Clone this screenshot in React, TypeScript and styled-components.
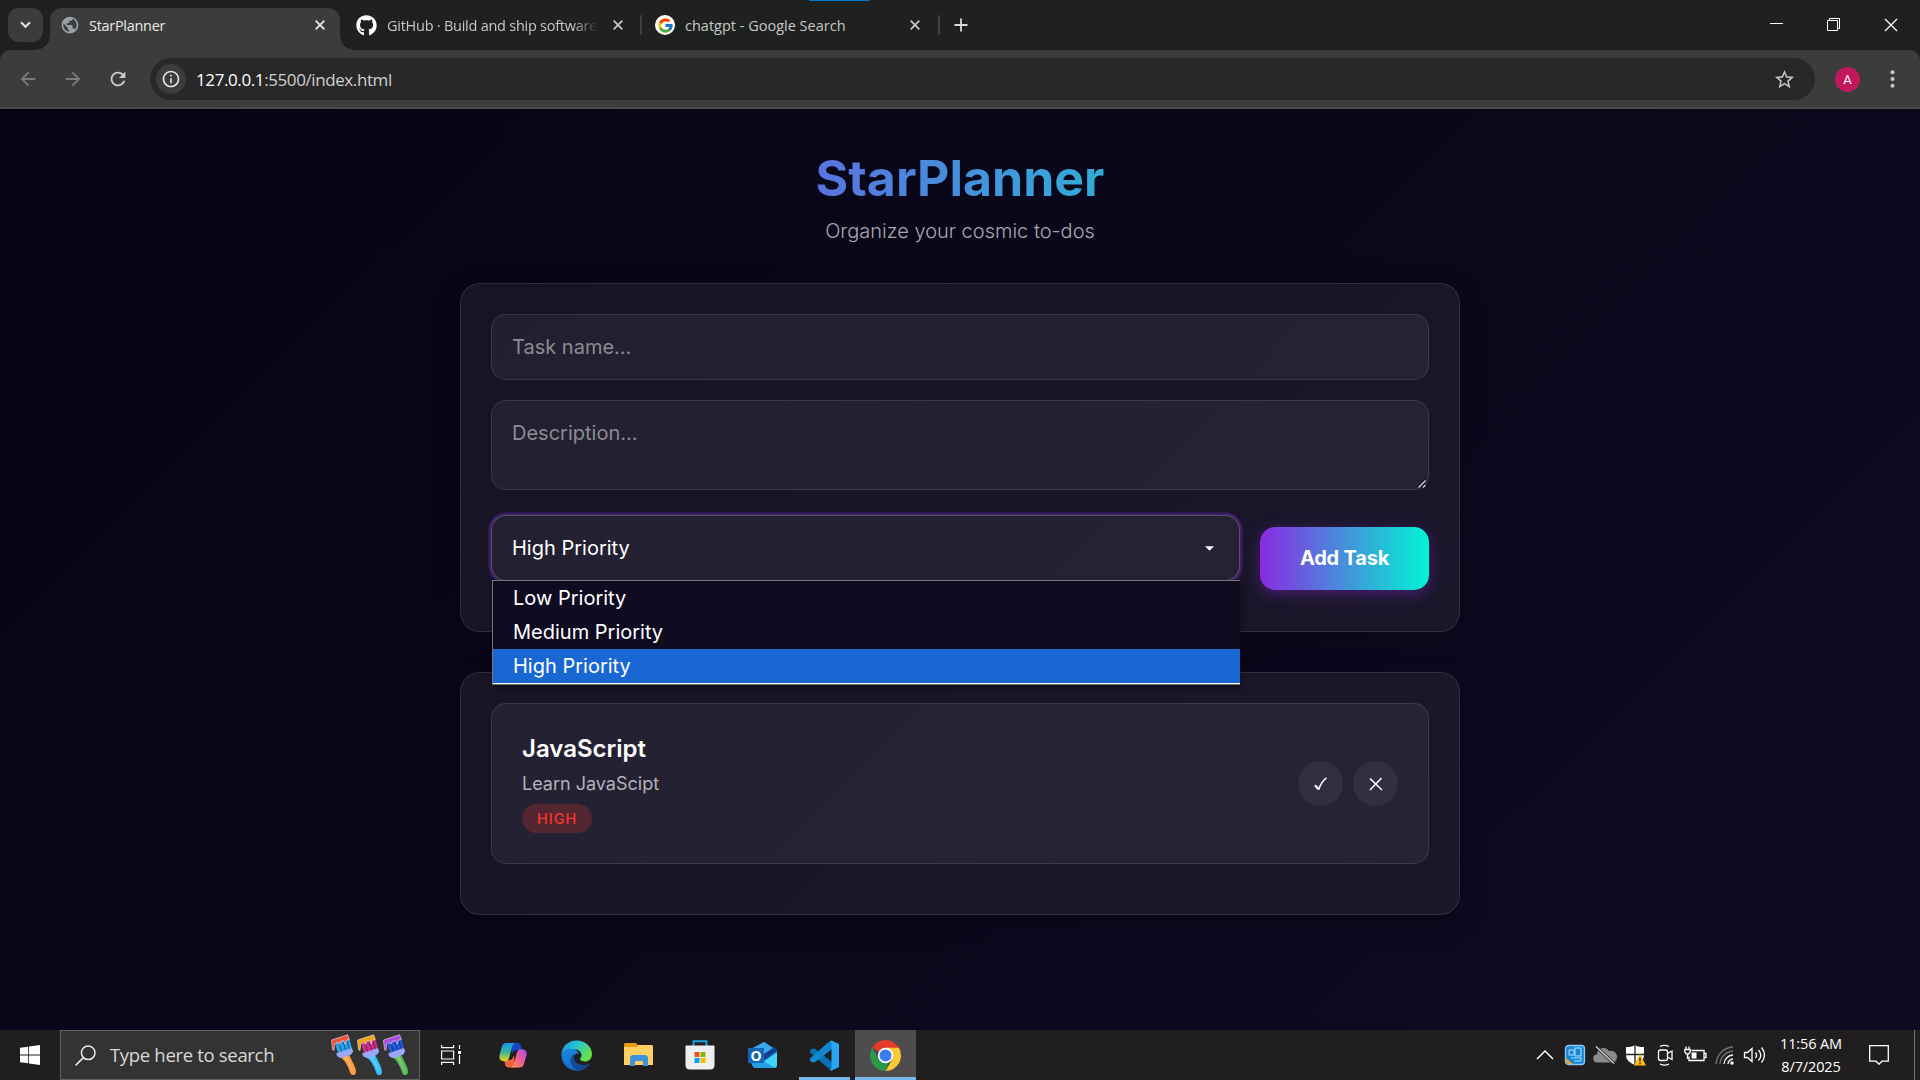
import React from "react";
import styled, { createGlobalStyle, css } from "styled-components";
import { MdArrowBack, MdArrowForward, MdInfoOutline, MdPublic, MdRefresh, MdStarBorder } from "react-icons/md";
import { FaGithub } from "react-icons/fa";
import { FcGoogle } from "react-icons/fc";

const systemFont = `"Segoe UI", "Open Sans", "Noto Sans", sans-serif`;
const pageFont = `Inter, "Liberation Sans", sans-serif`;

const GlobalStyle = createGlobalStyle`
  * { box-sizing: border-box; }
  body { margin: 0; background: #09061a; overflow: hidden; }
  svg { display: block; flex: none; }
`;

const Screen = styled.div`
  width: 1920px;
  height: 1080px;
  display: flex;
  flex-direction: column;
  overflow: hidden;
  font-family: ${systemFont};
`;

/* ---------- Browser chrome ---------- */

const TabStrip = styled.div`
  position: relative;
  height: 50px;
  flex: none;
  display: flex;
  align-items: stretch;
  padding: 8px 0 0 8px;
  background: #1f2120;
`;

const LoadingMark = styled.div`
  position: absolute;
  top: 0;
  left: 809px;
  width: 60px;
  height: 1px;
  background: #0078d7;
`;

const TabSearch = styled.div`
  width: 35px;
  height: 34px;
  margin-right: 7px;
  border-radius: 11px;
  background: #3c3c3c;
  display: flex;
  align-items: center;
  justify-content: center;
`;

const Tab = styled.div<{ $active?: boolean; $width: number; $start: number; $end: number }>`
  position: relative;
  width: ${(p) => p.$width}px;
  display: flex;
  align-items: center;
  padding: 0 ${(p) => p.$end}px 8px ${(p) => p.$start}px;
  color: ${(p) => (p.$active ? "#e8e8e8" : "#c7c7c7")};
  ${(p) =>
    p.$active &&
    css`
      background: #3c3c3c;
      border-radius: 12px 12px 0 0;
      &::before,
      &::after {
        content: "";
        position: absolute;
        bottom: 0;
        width: 14px;
        height: 14px;
      }
      &::before {
        left: -14px;
        background: radial-gradient(circle at 0 0, transparent 13.5px, #3c3c3c 14px);
      }
      &::after {
        right: -14px;
        background: radial-gradient(circle at 100% 0, transparent 13.5px, #3c3c3c 14px);
      }
    `}
`;

const TabTitle = styled.span<{ $spacing: number; $start: number; $end?: number; $fade?: boolean }>`
  flex: 1;
  min-width: 0;
  margin: 0 ${(p) => p.$end ?? 9}px 0 ${(p) => p.$start}px;
  padding-top: 2px;
  overflow: hidden;
  white-space: nowrap;
  font-size: 14.5px;
  line-height: 22px;
  letter-spacing: ${(p) => p.$spacing}px;
  ${(p) => p.$fade && css`
    mask-image: linear-gradient(90deg, #000 88%, transparent 100%);
  `}
`;

const TabDivider = styled.div`
  width: 2px;
  height: 20px;
  margin-top: 7px;
  border-radius: 1px;
  background: #3f4140;
`;

const GoogleBadge = styled.span`
  width: 20px;
  height: 20px;
  border-radius: 50%;
  background: #fff;
  display: flex;
  align-items: center;
  justify-content: center;
`;

const NewTab = styled.div`
  width: 42px;
  height: 34px;
  display: flex;
  align-items: center;
  justify-content: center;
`;

const WindowControls = styled.div`
  margin-left: auto;
  margin-right: 1px;
  display: flex;
  height: 33px;
`;

const WindowControl = styled.div`
  width: 57px;
  color: #fff;
  display: flex;
  align-items: center;
  justify-content: center;
`;

const ToolbarBack = styled.div`
  height: 59px;
  flex: none;
  background: #1f2120;
`;

const Toolbar = styled.div`
  height: 59px;
  display: flex;
  align-items: center;
  padding: 1px 0 0 17px;
  background: #3c3c3c;
  border-bottom: 2px solid #4a4a4a;
  border-radius: 10px 10px 0 0;
`;

const NavButton = styled.span<{ $dim?: boolean }>`
  width: 45px;
  display: flex;
  color: ${(p) => (p.$dim ? "#7b7b7b" : "#cfcfcf")};
`;

const AddressBar = styled.div`
  width: 1665px;
  height: 42px;
  margin-left: -2px;
  padding: 0 19px 0 6px;
  border-radius: 21px;
  background: #282828;
  display: flex;
  align-items: center;
  color: #c7c7c7;
`;

const InfoBadge = styled.span`
  width: 30px;
  height: 30px;
  border-radius: 50%;
  background: #3c3c3c;
  color: #e3e3e3;
  display: flex;
  align-items: center;
  justify-content: center;
`;

const Url = styled.span`
  flex: 1;
  margin-left: 10px;
  padding-top: 1px;
  font-size: 17px;
  letter-spacing: -0.4px;
  color: #d0d0d0;
  b {
    font-weight: 400;
    color: #fff;
  }
`;

const Avatar = styled.span`
  width: 25px;
  height: 25px;
  margin-left: 20px;
  border-radius: 50%;
  background: #c2185b;
  color: #fff;
  font: 400 13px/25px Roboto, sans-serif;
  text-align: center;
`;

const MenuDots = styled.span`
  margin-left: 30px;
`;

/* ---------- Page ---------- */

const Page = styled.main`
  height: 921px;
  flex: none;
  display: flex;
  flex-direction: column;
  align-items: center;
  background: linear-gradient(135deg, #060415 0%, #0f0b21 100%);
  font-family: ${pageFont};
  color: #fff;
`;

const Title = styled.h1`
  width: 1000px;
  margin: 38px 0 0;
  font-size: 50px;
  font-weight: 700;
  line-height: 62px;
  text-align: center;
  background: linear-gradient(90deg, #8a2be2, #00f5d4);
  background-clip: text;
  -webkit-background-clip: text;
  color: transparent;
`;

const Subtitle = styled.p`
  margin: 10px 0 39px;
  font-size: 20px;
  font-weight: 300;
  line-height: 25px;
  color: #a9a8ae;
`;

const Card = styled.section<{ $height: number }>`
  width: 1000px;
  height: ${(p) => p.$height}px;
  padding: 30px;
  border: 1px solid rgba(255, 255, 255, 0.1);
  border-radius: 20px;
  background: rgba(255, 255, 255, 0.06);
  box-shadow: 0 8px 32px rgba(0, 0, 0, 0.1);
  & + & {
    margin-top: 40px;
  }
`;

const fieldStyle = css`
  border: 1px solid rgba(255, 255, 255, 0.1);
  border-radius: 15px;
  background: rgba(255, 255, 255, 0.055);
  padding: 20px;
  font-size: 20px;
  line-height: 24px;
`;

const Field = styled.div<{ $height: number; $gap: number }>`
  ${fieldStyle}
  position: relative;
  height: ${(p) => p.$height}px;
  margin-bottom: ${(p) => p.$gap}px;
  color: #8d8b94;
`;

const ResizeGrip = styled.svg`
  position: absolute;
  right: 2px;
  bottom: 1px;
`;

const FormRow = styled.div`
  display: flex;
  gap: 20px;
`;

const Select = styled.div`
  ${fieldStyle}
  position: relative;
  flex: 1;
  height: 66px;
  display: flex;
  align-items: center;
  justify-content: space-between;
  padding-right: 25px;
  border-color: rgba(255, 255, 255, 0.24);
  box-shadow: 0 0 0 2.5px rgba(138, 43, 226, 0.35);
`;

const Options = styled.div`
  position: absolute;
  z-index: 2;
  top: 64px;
  left: 0;
  right: -1px;
  height: 105px;
  background: #0f0b21;
  border: solid #767676;
  border-width: 1px 0 1px 1px;
  box-shadow: 2px 4px 6px rgba(0, 0, 0, 0.35);
`;

const Option = styled.div<{ $selected?: boolean }>`
  height: ${(p) => (p.$selected ? 35 : 34)}px;
  padding-left: 20px;
  line-height: 34px;
  background: ${(p) => (p.$selected ? "#1967d2" : "transparent")};
  border-bottom: ${(p) => (p.$selected ? "1px solid #fff" : "0")};
`;

const AddButton = styled.button`
  width: 169px;
  height: 63px;
  margin-top: 12px;
  padding: 0 0 2px;
  border: 0;
  border-radius: 15px;
  background: linear-gradient(90deg, #8a2be2, #00f5d4);
  box-shadow: 0 4px 15px rgba(138, 43, 226, 0.4);
  color: #fff;
  font: 700 20px Inter, sans-serif;
  letter-spacing: -0.2px;
`;

const TaskItem = styled.article`
  height: 161px;
  padding: 30px;
  display: flex;
  justify-content: space-between;
  align-items: center;
  border: 1px solid rgba(255, 255, 255, 0.1);
  border-radius: 15px;
  background: rgba(255, 255, 255, 0.055);
`;

const TaskText = styled.div`
  align-self: flex-start;
  display: flex;
  flex-direction: column;
  align-items: flex-start;
`;

const TaskName = styled.h3`
  margin: 0 0 9px;
  font-size: 24px;
  font-weight: 600;
  line-height: 29px;
`;

const TaskNote = styled.p`
  margin: 0 0 8px;
  font-size: 18px;
  line-height: 24px;
  color: #b3b2b8;
`;

const Priority = styled.span`
  height: 29px;
  padding: 0 15px;
  border-radius: 15px;
  background: rgba(255, 59, 48, 0.22);
  color: #f8352c;
  font-size: 14.4px;
  font-weight: 500;
  line-height: 29px;
  letter-spacing: 1px;
`;

const TaskActions = styled.div`
  display: flex;
  gap: 10px;
`;

const RoundButton = styled.button`
  width: 45px;
  height: 45px;
  padding: 0;
  border: 0;
  border-radius: 50%;
  background: rgba(255, 255, 255, 0.06);
  display: flex;
  align-items: center;
  justify-content: center;
`;

/* ---------- Taskbar ---------- */

const Taskbar = styled.footer`
  height: 50px;
  flex: none;
  display: flex;
  background: #201e1e;
`;

const TaskbarCell = styled.div<{ $width: number; $active?: boolean; $line?: number }>`
  position: relative;
  width: ${(p) => p.$width}px;
  flex: none;
  display: flex;
  align-items: center;
  justify-content: center;
  background: ${(p) => (p.$active ? "#4e4c4c" : "transparent")};
  ${(p) =>
    p.$line &&
    css`
      &::after {
        content: "";
        position: absolute;
        bottom: 0;
        width: ${p.$line}px;
        height: 3px;
        background: #76b9ed;
      }
    `}
`;

const SearchBox = styled.div`
  width: 360px;
  display: flex;
  align-items: center;
  padding: 0 10px 0 14px;
  border: 1px solid #616161;
  background: #333;
  color: #d8d8d8;
  font-size: 18.5px;
  letter-spacing: -0.32px;
  span {
    flex: 1;
    margin-left: 14px;
    padding-bottom: 1px;
  }
`;

const Tray = styled.div`
  margin-left: auto;
  display: flex;
`;

const Clock = styled.div`
  width: 82px;
  margin-right: 2px;
  display: flex;
  flex-direction: column;
  align-items: center;
  justify-content: center;
  color: #fff;
  font-size: 14.5px;
  line-height: 23px;
  letter-spacing: -0.12px;
  white-space: nowrap;
`;

const DesktopEdge = styled.div`
  width: 6px;
  margin-left: 10px;
  border-left: 1px solid #777;
`;

/* ---------- Drawings ---------- */

const CloseGlyph = ({ size = 10, width = 1.8 }: { size?: number; width?: number }) => (
  <svg width={size} height={size} viewBox="0 0 10 10" stroke="currentColor" strokeWidth={width} fill="none">
    <path d="M.7.7l8.6 8.6M9.3.7L.7 9.3" />
  </svg>
);

const Brush = ({ paint, bristle, handle }: { paint: string; bristle: string; handle: string }) => (
  <svg width="26" height="42" viewBox="0 0 26 42">
    <path d="M9.500 23l8.500-3c1 4 7.500 13 7 18.500-.4 3-4 3.500-5.500 1C18 35 15.500 28 9.500 23z" fill={handle} />
    <path d="M12 23l4.500-1.500c.5 4 5 10 5.500 17-4-7-5-11-10-15.500z" fill="#fff" opacity=".22" />
    <path d="M3 6l14.500-4 4 14-14 5z" fill={bristle} />
    <path d="M.5 6L16.500.8l1.800 4.800-3 .5-1 4-2-3.500-3 .8-1 3.200-2-2.500-2.600 2L3 16.500l-1.500-1z" fill={paint} stroke="#f4e6e0" strokeWidth=".6" />
    <path d="M8 10l3 8M12 8l3 9M16 7l2.500 8" stroke="#152a75" strokeWidth="1.100" opacity=".6" />
    <path d="M5 19.500L20.800 14l1.400 3.500-2 3-10 3.700-3.700-1.700z" fill="#9aa8f5" />
  </svg>
);

const Copilot = () => (
  <svg width="30" height="28" viewBox="-1 0 30 28">
    <defs>
      <linearGradient id="cpA" x1="0" y1="0" x2="0" y2="1"><stop stopColor="#1698ef" /><stop offset=".5" stopColor="#36b39a" /><stop offset="1" stopColor="#f2d516" /></linearGradient>
      <linearGradient id="cpB" x1="1" y1="0" x2="0" y2="1"><stop stopColor="#a24bf0" /><stop offset=".5" stopColor="#ee5d95" /><stop offset="1" stopColor="#fb9a4e" /></linearGradient>
    </defs>
    <path d="M12 2h6.500c2 0 2.800.8 3.300 2.800L23 9h-5c-3 0-4 1-5 4z" fill="#1546c4" />
    <path d="M16 26.500H9.500c-2 0-2.800-1-3.300-3L5 19h5c3 0 4-2 5-5z" fill="#f0623d" />
    <path d="M7.500 2H16c-2 1-2.700 3-3.500 6l-2.300 8.500c-.8 3-2.200 3.700-4.200 3.700-4.500 0-6.500-2-5.300-6.700L3 5.500C3.800 3 5 2 7.500 2z" fill="url(#cpA)" />
    <path d="M20.500 26.500H12c2-1 2.700-3 3.500-6L17.800 12c.8-3 2.200-3.800 4.200-3.800 4.500 0 6.500 2 5.300 6.800L25 23c-.8 2.500-2 3.500-4.500 3.500z" fill="url(#cpB)" />
  </svg>
);

const Edge = () => (
  <svg width="31" height="31" viewBox="0 0 31 31">
    <defs>
      <linearGradient id="edA" x1="0" y1="0" x2="1" y2=".5"><stop stopColor="#1593dd" /><stop offset=".5" stopColor="#2bc3d2" /><stop offset="1" stopColor="#66e34a" /></linearGradient>
      <linearGradient id="edB" x1="0" y1="0" x2=".4" y2="1"><stop stopColor="#1a8cdb" /><stop offset="1" stopColor="#0f6cd0" /></linearGradient>
    </defs>
    <path d="M.5 15C.5 6.500 7 .4 15.500.4S31 6.500 31 14c0 5-3.500 7.500-7 7.500-3 0-5-1.300-5-2.500s1.500-1.500 1.500-4c0-3-3.500-6-8-6S.5 12 .5 15z" fill="url(#edA)" />
    <path d="M.5 15c0-4 4.500-6.500 9-6.500 5 0 8 3 8 5-4 0-6.500 3-6.500 7 0 6 5 9 9 10C9 32 .5 25 .5 15z" fill="url(#edB)" />
    <path d="M13 14c-3 2-4 5-3 9 1.500 5 6 8 9 7.500 4-.5 7.500-3 10-7-9 4-17 0-16-9.500z" fill="#114a97" />
  </svg>
);

const Folder = () => (
  <svg width="29" height="24" viewBox="0 0 29 24">
    <path d="M1 0h11l2 2-2 2H0V1z" fill="#e59b0b" />
    <path d="M0 4h12l2-2h14l1 1v19H0z" fill="#fdd061" />
    <path d="M6 23V14l2-2h14l2 2v9h-5v-5h-8v5z" fill="#3c92dc" />
  </svg>
);

const Store = () => (
  <svg width="30" height="30" viewBox="0 0 30 30">
    <path d="M8.500 7V1.200h13V7" fill="none" stroke="#1ea6df" strokeWidth="2" />
    <path d="M.5 5.500h29V25c0 3-1.500 4.500-4.500 4.500H5C2 29.500.5 28 .5 25z" fill="#efefef" />
    <path d="M9.500 12h5v5h-5z" fill="#f25022" /><path d="M15.500 12h5v5h-5z" fill="#7fba00" />
    <path d="M9.500 18h5v5h-5z" fill="#00a4ef" /><path d="M15.500 18h5v5h-5z" fill="#ffb900" />
  </svg>
);

const OutlookLabel = styled.span`
  position: absolute;
  left: 17px;
  top: 18px;
  width: 16px;
  height: 15px;
  background: #1267b9;
  color: #fff;
  font: 700 14px/15px "Open Sans", sans-serif;
  text-align: center;
`;

const Outlook = () => (
  <>
    <svg width="30" height="28" viewBox="0 0 30 28">
      <path d="M4 8L17 1l13 8v15l-3 3H9l-5-4z" fill="#1476cf" />
      <path d="M4 8L17 1l9 6L15 14z" fill="#3aa8ea" />
      <path d="M12 16L28 6l2 4-16 11z" fill="#123f91" />
      <path d="M30 11v13c0 2-1 3-3 3H8z" fill="#42d5f8" />
      <path d="M5 22l7-4 17 9H9c-3 0-4-2-4-5z" fill="#249fe3" />
    </svg>
    <OutlookLabel>O</OutlookLabel>
  </>
);

const Code = () => (
  <svg width="31" height="31" viewBox="0 0 31 31">
    <path d="M1 10.500l2-2 3 .2L23 22v8L19 28 1 12.500z" fill="#0870b4" />
    <path d="M1 20.500l2 2 3-.2L23 9V1l-4 1.500L1 18.500z" fill="#1287d0" />
    <path d="M22.500.5L30 4v23l-7.500 3.700-2-1 2-1.200V2.500l-2-1z" fill="#29a6f1" />
  </svg>
);

const Chrome = () => (
  <svg width="31" height="31" viewBox="0 0 31 31">
    <path d="M15.500 15.500L2.080 7.750A15.500 15.500 0 0 1 28.920 7.750z" fill="#e33b2e" />
    <path d="M15.500 7.750H28.920A15.500 15.500 0 0 1 15.500 31l6.700-11.600z" fill="#fcc934" />
    <path d="M2.080 7.750l6.700 11.620c1.500 2.500 4 3.900 6.700 3.900 1 0 2-.2 2.900-.5L15.500 31A15.500 15.500 0 0 1 2.080 7.750z" fill="#2a9a48" />
    <circle cx="15.500" cy="15.500" r="7.700" fill="#fff" />
    <circle cx="15.500" cy="15.500" r="6" fill="#3b7ded" />
  </svg>
);

const TrayIcon = ({ children }: { children: React.ReactNode }) => (
  <TaskbarCell $width={30}>
    <svg width="24" height="24" viewBox="0 0 24 24" fill="none" stroke="#fff" strokeWidth="1.3">
      {children}
    </svg>
  </TaskbarCell>
);

export default function App() {
  return (
    <Screen>
      <GlobalStyle />
      <TabStrip>
        <LoadingMark />
        <TabSearch>
          <svg width="11" height="8" viewBox="0 0 11 8" fill="none" stroke="#e3e3e3" strokeWidth="2"><path d="M1 1.300l4.500 4.500L10 1.300" /></svg>
        </TabSearch>
        <Tab $active $width={290} $start={10} $end={15}>
          <MdPublic size={20} color="#9aa0a6" />
          <TabTitle $spacing={-0.3} $start={9}>StarPlanner</TabTitle>
          <CloseGlyph />
        </Tab>
        <Tab $width={300} $start={16} $end={17}>
          <FaGithub size={21} color="#fff" />
          <TabTitle $spacing={-0.25} $start={10} $end={15} $fade>GitHub · Build and ship software</TabTitle>
          <CloseGlyph />
        </Tab>
        <TabDivider />
        <Tab $width={296} $start={13} $end={18}>
          <GoogleBadge><FcGoogle size={17} /></GoogleBadge>
          <TabTitle $spacing={0} $start={10}>chatgpt - Google Search</TabTitle>
          <CloseGlyph />
        </Tab>
        <TabDivider />
        <NewTab>
          <svg width="14" height="14" viewBox="0 0 14 14" stroke="#d8d8d8" strokeWidth="1.800"><path d="M7 .5v13M.5 7h13" /></svg>
        </NewTab>
        <WindowControls>
          <WindowControl><svg width="13" height="13" viewBox="0 0 13 13"><path d="M0 5.500h13" stroke="#fff" /></svg></WindowControl>
          <WindowControl><svg width="13" height="13" viewBox="0 0 13 13" fill="none" stroke="#fff"><path d="M.5 2.500h10v10H.5zM2.500 2.500v-2h10v10h-2" /></svg></WindowControl>
          <WindowControl><CloseGlyph size={14} width={0.9} /></WindowControl>
        </WindowControls>
      </TabStrip>
      <ToolbarBack>
        <Toolbar>
          <NavButton $dim><MdArrowBack size={22} /></NavButton>
          <NavButton $dim><MdArrowForward size={22} /></NavButton>
          <NavButton><MdRefresh size={22} /></NavButton>
          <AddressBar>
            <InfoBadge><MdInfoOutline size={20} /></InfoBadge>
            <Url><b>127.0.0.1</b>:5500/index.html</Url>
            <MdStarBorder size={23} />
          </AddressBar>
          <Avatar>A</Avatar>
          <MenuDots>
            <svg width="5" height="18" viewBox="0 0 5 18" fill="#c7c7c7"><circle cx="2.500" cy="2.200" r="2" /><circle cx="2.500" cy="9" r="2" /><circle cx="2.500" cy="15.800" r="2" /></svg>
          </MenuDots>
        </Toolbar>
      </ToolbarBack>

      <Page>
        <Title>StarPlanner</Title>
        <Subtitle>Organize your cosmic to-dos</Subtitle>
        <Card $height={349}>
          <Field $height={66} $gap={20}>Task name...</Field>
          <Field $height={90} $gap={25}>
            Description...
            <ResizeGrip width="9" height="9" viewBox="0 0 9 9">
              <path d="M0 8L8 0M5 8l3-3" stroke="#101018" strokeWidth="1.600" />
              <path d="M1.500 8.500l7-7M6 8.500L8.500 6" stroke="#d5d5d8" strokeWidth="1.300" />
            </ResizeGrip>
          </Field>
          <FormRow>
            <Select>
              High Priority
              <svg width="9" height="5" viewBox="0 0 9 5"><path d="M0 .3h9L4.500 4.800z" fill="#fff" /></svg>
              <Options>
                <Option>Low Priority</Option>
                <Option>Medium Priority</Option>
                <Option $selected>High Priority</Option>
              </Options>
            </Select>
            <AddButton>Add Task</AddButton>
          </FormRow>
        </Card>
        <Card $height={243}>
          <TaskItem>
            <TaskText>
              <TaskName>JavaScript</TaskName>
              <TaskNote>Learn JavaScipt</TaskNote>
              <Priority>HIGH</Priority>
            </TaskText>
            <TaskActions>
              <RoundButton>
                <svg width="14" height="14" viewBox="0 0 14 14" fill="none" stroke="#fff"><path d="M1 8.200l3.700 4" strokeWidth="2.400" /><path d="M4.600 12.800C6 8.500 8.500 3.500 12.500.8" strokeWidth="1.500" /></svg>
              </RoundButton>
              <RoundButton>
                <svg width="14" height="14" viewBox="0 0 14 14" stroke="#fff" strokeWidth="1.600"><path d="M1 1.500l12 11.500M12.500 1L1 13" /></svg>
              </RoundButton>
            </TaskActions>
          </TaskItem>
        </Card>
      </Page>

      <Taskbar>
        <TaskbarCell $width={60}>
          <svg width="20" height="20" viewBox="0 0 20 20" fill="#fff"><path d="M0 2.800l8.200-1.100v7.900H0zM9 1.600L20 0v9.600H9zM0 10.400h8.200v7.900L0 17.200zM9 10.400h11V20L9 18.400z" /></svg>
        </TaskbarCell>
        <SearchBox>
          <svg width="21" height="21" viewBox="0 0 21 21" fill="none" stroke="#e8e8e8" strokeWidth="1.500"><circle cx="13.200" cy="7.800" r="6.800" /><path d="M8.400 12.600L.6 20.400" /></svg>
          <span>Type here to search</span>
          <Brush paint="#ef513a" bristle="#2aa3e4" handle="#ff9a3d" />
          <Brush paint="#e9a41c" bristle="#d52f84" handle="#38bdf8" />
          <Brush paint="#a94de0" bristle="#2458d8" handle="#5cba57" />
        </SearchBox>
        <TaskbarCell $width={61}>
          <svg width="20" height="20" viewBox="0 0 20 20" fill="none" stroke="#fff" strokeWidth="1.200"><path d="M.6 0v2.600h12V0M.6 6h12v8H.6zM.6 20v-2.600h12V20M18.500 0v4M18.500 10v9" /><path d="M17 6h3v3h-3z" fill="#fff" stroke="none" /></svg>
        </TaskbarCell>
        <TaskbarCell $width={64}><Copilot /></TaskbarCell>
        <TaskbarCell $width={62}><Edge /></TaskbarCell>
        <TaskbarCell $width={62}><Folder /></TaskbarCell>
        <TaskbarCell $width={62}><Store /></TaskbarCell>
        <TaskbarCell $width={62}><Outlook /></TaskbarCell>
        <TaskbarCell $width={62} $line={51}><Code /></TaskbarCell>
        <TaskbarCell $width={61} $active $line={61}><Chrome /></TaskbarCell>
        <Tray>
          <TrayIcon><path d="M4 16l8-8 8 8" strokeWidth="1.500" /></TrayIcon>
          <TrayIcon>
            <rect x="2.500" y="2.500" width="19" height="19" rx="3" fill="#1686d9" stroke="#8fc7ee" />
            <path d="M3 15v4l2 2h5z" fill="#e8a33b" stroke="none" />
            <path d="M6 7h5v5H6zM12 5h6v8h-6zM8 15h9M11 18h7v-4" stroke="#b6e3ff" strokeWidth="1" />
          </TrayIcon>
          <TrayIcon>
            <path d="M4.500 19.500a4 4 0 0 1-.5-8A6.500 6.500 0 0 1 16 8a6 6 0 0 1 4 11.500z" fill="#8a8a8a" stroke="none" />
            <path d="M3 3.500l18 17" stroke="#201e1e" strokeWidth="3" /><path d="M3 3.500l18 17" stroke="#ddd" />
          </TrayIcon>
          <TrayIcon>
            <path d="M12 2c3 2 6 2 9 2v8c0 5-4 8-9 10-5-2-9-5-9-10V4c3 0 6 0 9-2z" fill="#fff" stroke="none" />
            <path d="M12 2v20M3 11.500h18" stroke="#222" />
            <path d="M17 11l6 11.500H11z" fill="#fdb913" stroke="none" /><path d="M17 14.500v4M17 19.800v1.500" stroke="#222" />
          </TrayIcon>
          <TrayIcon><rect x="5.500" y="7" width="9" height="10.500" rx="2" /><path d="M14.500 10.500l4.500-2.500v8.500l-4.500-2.500M7 3.500c3-1.500 6-1.500 9 0M7 21c3 1.500 6 1.500 9 0" /></TrayIcon>
          <TrayIcon><path d="M8.500 7.500h12.500v10H6v-4M21.500 10.500H23v4h-1.500M3 3.500v3M6 3.500v3M1.800 6.500h5.400v2.500L5.500 11h-2L1.800 9zM4.500 11v5" /><path d="M8.500 9.500h5v6h-5z" fill="#fff" stroke="none" /></TrayIcon>
          <TrayIcon>
            <path d="M3 21A18 18 0 0 1 20 4M7 21A14 14 0 0 1 20 8" stroke="#777" />
            <path d="M11 21a9.500 9.500 0 0 1 9-9M15 21a5 5 0 0 1 5-5" /><circle cx="19" cy="20" r="1.800" fill="#fff" stroke="none" />
          </TrayIcon>
          <TrayIcon><path d="M1.500 9.500h3L9 5.500v13l-4.500-4H1.500zM12.500 9.500c1.500 2 1.500 3.500 0 5.500M15.500 7c3 3.500 3 7 0 10.500M18.500 4.500c4 5 4 10 0 15" /></TrayIcon>
          <Clock><span>11:56 AM</span><span>8/7/2025</span></Clock>
          <TaskbarCell $width={50}>
            <svg width="20" height="20" viewBox="0 0 20 20" fill="none" stroke="#fff" strokeWidth="1.300"><path d="M.7.7h18.600v15.500H13l-3 3-3-3H.7z" /></svg>
          </TaskbarCell>
          <DesktopEdge />
        </Tray>
      </Taskbar>
    </Screen>
  );
}
